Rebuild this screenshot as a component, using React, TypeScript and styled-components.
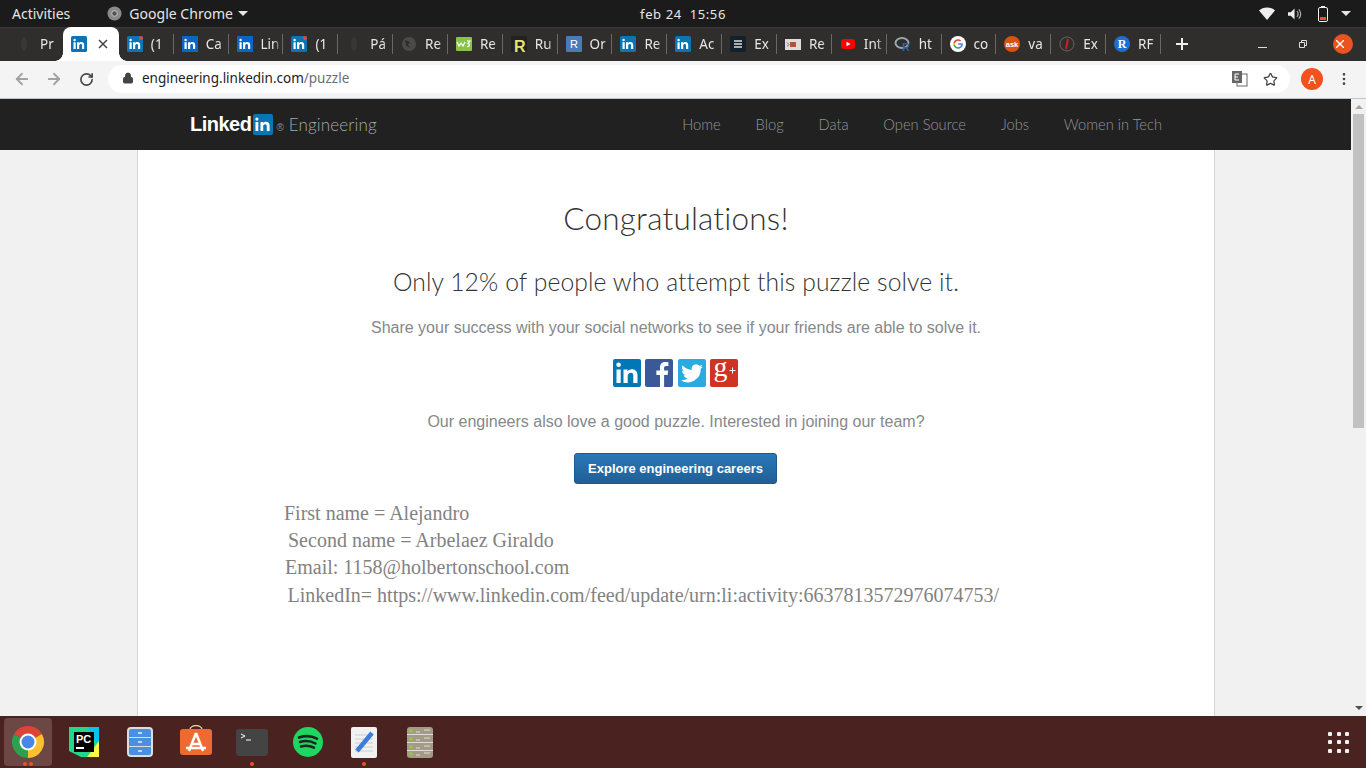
import { ReactNode } from 'react'
import styled, { createGlobalStyle } from 'styled-components'
import { ArrowLeft, ArrowRight, Lock, MoreVertical, RotateCw, Star } from 'lucide-react'

const GlobalStyle = createGlobalStyle`
  html, body { margin: 0; padding: 0; height: 100%; overflow: hidden; }
  #root { height: 768px; }
  * { box-sizing: border-box; }
`

const Screen = styled.div`
  width: 1366px;
  height: 768px;
  display: flex;
  flex-direction: column;
  overflow: hidden;
  font-family: 'Noto Sans', sans-serif;
`

const TopBar = styled.div`
  height: 27px;
  flex: none;
  background: #1b1b1b;
  color: #e6e6e6;
  font-size: 14px;
  display: grid;
  grid-template-columns: 1fr auto 1fr;
  align-items: center;
  padding: 0 12px;
`
const TopLeft = styled.div`
  display: flex;
  align-items: center;
`
const AppMenu = styled.div`
  display: flex;
  align-items: center;
  gap: 7px;
  margin-left: 37px;
`
const MenuName = styled.span`
  margin-right: -2px;
  letter-spacing: 0.02px;
`
const Clock = styled.div`
  font-size: 13px;
  letter-spacing: 0.6px;
  white-space: pre;
`
const TopRight = styled.div`
  display: flex;
  align-items: center;
  justify-content: flex-end;
  padding-right: 3px;
  svg:nth-child(1) { margin-right: 13px; }
  svg:nth-child(2) { margin-right: 16px; }
  svg:nth-child(3) { margin-right: 13px; }
`
const Caret = styled.span`
  width: 0;
  height: 0;
  border-left: 5px solid transparent;
  border-right: 5px solid transparent;
  border-top: 5px solid #e6e6e6;
`

const TabStrip = styled.div`
  height: 34px;
  flex: none;
  background: #2f2e2d;
  display: flex;
  align-items: stretch;
  padding-left: 8px;
  box-shadow: inset 0 1px 0 #3a3938;
`
const Tab = styled.div<{ $active?: boolean; $sep?: boolean }>`
  width: ${(p) => (p.$active ? 56 : 54.85)}px;
  flex: none;
  display: flex;
  align-items: center;
  gap: ${(p) => (p.$active ? 11 : 8)}px;
  padding-left: 8px;
  color: #e8e8e8;
  background: ${(p) => (p.$active ? '#fff' : 'transparent')};
  border-radius: ${(p) => (p.$active ? '8px 8px 0 0' : '0')};
  font-size: 13.5px;
  position: relative;
  white-space: nowrap;
  &::after {
    content: '';
    display: ${(p) => (p.$sep ? 'block' : 'none')};
    position: absolute;
    right: 0;
    top: 7px;
    height: 20px;
    width: 1px;
    background: #6a6967;
  }
`
const Flare = styled.span<{ $side: 'left' | 'right' }>`
  position: absolute;
  bottom: 0;
  width: 8px;
  height: 8px;
  ${(p) => (p.$side === 'left' ? 'left: -8px;' : 'right: -8px;')}
  background: radial-gradient(
    circle at ${(p) => (p.$side === 'left' ? '0 0' : '100% 0')},
    #2f2e2d 7.5px,
    #fff 8px
  );
`
const TabLabel = styled.span`
  width: 20px;
  overflow: hidden;
  flex: none;
  -webkit-mask-image: linear-gradient(90deg, #000 65%, transparent);
  mask-image: linear-gradient(90deg, #000 65%, transparent);
`
const Favicon = styled.span`
  width: 16px;
  height: 16px;
  flex: none;
  display: block;
  svg { overflow: visible; display: block; }
`
const NewTab = styled.div`
  width: 43px;
  display: flex;
  align-items: center;
  justify-content: center;
`
const WindowButtons = styled.div`
  margin-left: auto;
  display: flex;
  align-items: center;
  gap: 26px;
  padding-right: 13px;
  padding-bottom: 1px;
  svg:first-child { margin-right: 6px; }
`
const CloseButton = styled.span`
  width: 20px;
  height: 20px;
  border-radius: 50%;
  background: #e95420;
  display: flex;
  align-items: center;
  justify-content: center;
`

const AddressRow = styled.div`
  height: 37px;
  flex: none;
  background: #f4f4f4;
  display: flex;
  align-items: center;
  color: #555;
  padding: 0 0 1px 13px;
`
const NavIcons = styled.div`
  display: flex;
  align-items: center;
  gap: 14px;
  margin-right: 14px;
  color: #a2a2a2;
  svg:last-child { margin-left: 2px; }
`
const Omnibox = styled.div`
  width: 1182px;
  height: 28px;
  background: #fff;
  border-radius: 14px;
  display: flex;
  align-items: center;
  padding: 0 12px 2px 14px;
  font-size: 13.5px;
  color: #202124;
`
const UrlPath = styled.span`
  color: #6b6f73;
`
const OmniRight = styled.div`
  margin-left: auto;
  display: flex;
  align-items: center;
  gap: 15px;
  color: #444;
  margin-top: 2px;
`
const Avatar = styled.span`
  width: 22px;
  height: 22px;
  border-radius: 50%;
  background: #f4511e;
  color: #fff;
  font-size: 12px;
  display: flex;
  align-items: center;
  justify-content: center;
  margin-left: 11px;
`

const Viewport = styled.div`
  flex: 1;
  min-height: 0;
  display: flex;
  border-top: 1px solid #bfc7cc;
  background: #f1f1f1;
`
const Page = styled.div`
  flex: 1;
  min-width: 0;
  display: flex;
  flex-direction: column;
`
const SiteNav = styled.div`
  height: 51px;
  flex: none;
  background: #212121;
  display: flex;
  align-items: center;
  padding: 0 0 1px 190px;
  font-family: Lato, sans-serif;
`
const Logo = styled.div`
  display: flex;
  align-items: center;
  color: #fff;
  font-family: 'Liberation Sans', sans-serif;
  font-weight: 700;
  font-size: 20px;
  letter-spacing: -0.5px;
`
const LogoIn = styled.svg`
  margin-left: 2px;
`
const Reg = styled.span`
  font-size: 10px;
  color: #8a8a8a;
  font-weight: 400;
  margin: 7px 0 0 3px;
  letter-spacing: 0;
`
const LogoLabel = styled.span`
  font-family: Lato, sans-serif;
  font-weight: 300;
  font-size: 17px;
  color: #a4a8ab;
  margin-left: 5px;
  letter-spacing: 0.15px;
`
const NavLinks = styled.nav`
  display: flex;
  margin-left: auto;
  gap: 34.8px;
  margin-right: 189px;
  font-size: 14.7px;
  font-weight: 300;
  color: #92969a;
`
const Content = styled.main`
  flex: 1;
  width: 1078px;
  margin-left: 137px;
  background: #fff;
  border: solid #d6d6d6;
  border-width: 0 1px;
  text-align: center;
  font-family: 'Liberation Sans', sans-serif;
  color: #86888a;
  padding-top: 49px;
`
const Title = styled.h1`
  margin: 0;
  font-family: Lato, sans-serif;
  font-weight: 300;
  font-size: 31.5px;
  line-height: 38px;
  color: #333;
  letter-spacing: 0.2px;
`
const Subtitle = styled.h2`
  margin: 30px 0 0;
  font-family: Lato, sans-serif;
  font-weight: 300;
  font-size: 24.7px;
  line-height: 30px;
  color: #333;
  letter-spacing: 0.1px;
`
const Lead = styled.p<{ $top: number }>`
  margin: ${(p) => p.$top}px 0 0;
  font-size: 16px;
  line-height: 22px;
`
const Socials = styled.div`
  display: flex;
  justify-content: center;
  gap: 4.3px;
  margin-top: 20px;
  padding-right: 1px;
  svg { overflow: visible; }
`
const Career = styled.button`
  display: block;
  margin: 20px auto 0 436px;
  width: 203px;
  height: 31px;
  border: 1px solid #1c5a8e;
  border-radius: 3px;
  background: linear-gradient(#2a78b8, #215f95);
  color: #fff;
  font-family: 'Liberation Sans', sans-serif;
  font-weight: 700;
  font-size: 13px;
`
const Notes = styled.div`
  font-family: 'Liberation Serif', serif;
  font-size: 20px;
  line-height: 27.2px;
  color: #828282;
  text-align: left;
  margin: 16px 0 0 146px;
  white-space: pre;
`
const NoteLine = styled.div<{ $indent: number }>`
  padding-left: ${(p) => p.$indent}px;
`
const Scrollbar = styled.div`
  width: 15px;
  flex: none;
  background: #f1f1f1;
  display: flex;
  flex-direction: column;
  align-items: center;
  padding: 6px 0;
`
const ScrollArrow = styled.span<{ $down?: boolean }>`
  width: 0;
  height: 0;
  border-left: 4px solid transparent;
  border-right: 4px solid transparent;
  ${(p) => (p.$down ? 'border-top: 4px solid #505050; margin-top: auto;' : 'border-bottom: 4px solid #a3a3a3;')}
`
const ScrollThumb = styled.div`
  width: 11px;
  height: 314px;
  margin-top: 5px;
  background: #c1c1c1;
`

const Dock = styled.div`
  height: 52px;
  flex: none;
  background: #4a2320;
  display: flex;
  align-items: center;
  padding-left: 4px;
`
const DockSlot = styled.div<{ $active?: boolean }>`
  width: 48px;
  height: 48px;
  margin-right: 8px;
  border-radius: 4px;
  background: ${(p) => (p.$active ? '#6d4743' : 'transparent')};
  display: flex;
  align-items: center;
  justify-content: center;
  position: relative;
`
const DotRow = styled.div`
  position: absolute;
  bottom: 0;
  left: 0;
  right: 0;
  display: flex;
  justify-content: center;
  gap: 2px;
`
const Dot = styled.span`
  width: 4px;
  height: 4px;
  border-radius: 50%;
  background: #e95420;
`
const GridButton = styled.div`
  margin-left: auto;
  margin-right: 17px;
  display: grid;
  grid-template-columns: repeat(3, 4px);
  gap: 4.5px;
`
const GridDot = styled.span`
  width: 4px;
  height: 4px;
  border-radius: 1px;
  background: #f2f2f2;
`

const IN_GLYPH =
  'M2.5 6.2h2.2V13H2.5zM3.6 2.8a1.2 1.2 0 1 1 0 2.4 1.2 1.2 0 0 1 0-2.4zM6 6.2h2.1v.9c.4-.6 1.1-1.1 2.2-1.1 2 0 2.9 1.2 2.9 3.2V13H11V9.6c0-1-.4-1.6-1.3-1.6s-1.5.6-1.5 1.6V13H6z'

function In({ dot, square }: { dot?: boolean; square?: boolean }) {
  return (
    <svg width={16} height={16} viewBox="0 0 16 16">
      <rect width="16" height="16" rx={square ? 0 : 1.5} fill={square ? '#0a66c2' : '#0a75b5'} />
      <path fill="#fff" d={IN_GLYPH} />
      {dot && <circle cx="14" cy="2" r="2" fill="#e8453c" />}
    </svg>
  )
}

function Flame() {
  return (
    <svg width="16" height="16" viewBox="0 0 16 16">
      <ellipse cx="8" cy="8" rx="3" ry="7" fill="#383736" />
    </svg>
  )
}

const tabs: { label: string; icon: ReactNode }[] = [
  { label: 'Pr', icon: <Flame /> },
  { label: '', icon: <In /> },
  { label: '(1', icon: <In dot /> },
  { label: 'Ca', icon: <In square /> },
  { label: 'Lin', icon: <In square /> },
  { label: '(1', icon: <In dot /> },
  { label: 'Pá', icon: <Flame /> },
  {
    label: 'Re',
    icon: (
      <svg width="16" height="16" viewBox="0 0 16 16">
        <circle cx="8" cy="8" r="7" fill="#4a4a4a" />
        <path d="M4 4l5 2-2 3 3 3-5-2z" fill="#2f2e2d" />
      </svg>
    ),
  },
  {
    label: 'Re',
    icon: (
      <svg width="16" height="16" viewBox="0 0 16 16">
        <rect width="16" height="14" y="1" rx="1" fill="#8bc34a" />
        <path d="M1 6l2 4 2-3 2 3 2-4M11 5h3l-2 2.500c2 0 2 3.500-1 3" stroke="#fff" strokeWidth="1.200" fill="none" />
      </svg>
    ),
  },
  {
    label: 'Ru',
    icon: (
      <svg width="16" height="16" viewBox="0 0 16 16">
        <rect width="16" height="16" fill="#222" />
        <text x="3" y="16" fontFamily="Liberation Sans" fontWeight="700" fontSize="16" fill="#e8e36a">R</text>
      </svg>
    ),
  },
  {
    label: 'Or',
    icon: (
      <svg width="16" height="16" viewBox="0 0 16 16">
        <rect width="16" height="16" rx="1" fill="#4a7bb8" />
        <text x="4" y="12" fontFamily="Liberation Sans" fontSize="11" fill="#fff">R</text>
      </svg>
    ),
  },
  { label: 'Re', icon: <In /> },
  { label: 'Ac', icon: <In /> },
  {
    label: 'Ex',
    icon: (
      <svg width="16" height="16" viewBox="0 0 16 16">
        <rect width="16" height="16" rx="2" fill="#14202b" />
        <path d="M4 5h8M4 8h8M4 11h8" stroke="#ddd" strokeWidth="1.400" />
      </svg>
    ),
  },
  {
    label: 'Re',
    icon: (
      <svg width="16" height="16" viewBox="0 0 16 16">
        <rect y="3" width="16" height="11" fill="#ddd" />
        <rect x="5" y="6" width="6" height="5" fill="#c0512a" />
        <path d="M8 6v5M2 6.500L4 8.500 2 10.500" stroke="#666" fill="none" />
      </svg>
    ),
  },
  {
    label: 'Int',
    icon: (
      <svg width="16" height="16" viewBox="0 0 16 16">
        <rect x="1" y="3" width="14" height="10" rx="3" fill="#f00" />
        <path d="M6.500 5.800v4.400L10.500 8z" fill="#fff" />
      </svg>
    ),
  },
  {
    label: 'ht',
    icon: (
      <svg width="16" height="16" viewBox="0 0 16 16">
        <ellipse cx="7" cy="7" rx="6.500" ry="5" fill="none" stroke="#9aa7b5" strokeWidth="2" />
        <text x="7" y="15" fontFamily="Liberation Sans" fontWeight="700" fontSize="11" fill="#2266bb">R</text>
      </svg>
    ),
  },
  {
    label: 'co',
    icon: (
      <svg width="16" height="16" viewBox="0 0 16 16">
        <circle cx="8" cy="8" r="8" fill="#fff" />
        <path d="M8 3.200a4.800 4.800 0 0 1 3.200 1.200l-1.200 1.200A3.100 3.100 0 0 0 5 7H3.400A4.800 4.800 0 0 1 8 3.200z" fill="#ea4335" />
        <path d="M3.400 7H5v2H3.400a4.800 4.800 0 0 1 0-2z" fill="#fbbc05" />
        <path d="M3.400 9H5a3.100 3.100 0 0 0 5 1.400l1.300 1.200A4.800 4.800 0 0 1 3.400 9z" fill="#34a853" />
        <path d="M8.100 7.200h4.700c.2 1.700-.3 3.300-1.500 4.400L10 10.400c.6-.4 1-1 1.100-1.600h-3z" fill="#4285f4" />
      </svg>
    ),
  },
  {
    label: 'va',
    icon: (
      <svg width="16" height="16" viewBox="0 0 16 16">
        <circle cx="8" cy="8" r="8" fill="#d9530f" />
        <text x="8" y="10.500" textAnchor="middle" fontFamily="Liberation Sans" fontWeight="700" fontSize="7.500" fill="#fff">ask</text>
      </svg>
    ),
  },
  {
    label: 'Ex',
    icon: (
      <svg width="16" height="16" viewBox="0 0 16 16">
        <circle cx="8" cy="8" r="7" fill="#2f2e2d" stroke="#666" />
        <path d="M9 3L7 13" stroke="#d01f1f" strokeWidth="2" />
      </svg>
    ),
  },
  {
    label: 'RF',
    icon: (
      <svg width="16" height="16" viewBox="0 0 16 16">
        <circle cx="8" cy="8" r="8" fill="#1f6fd0" />
        <text x="8" y="12" textAnchor="middle" fontFamily="Liberation Serif" fontWeight="700" fontSize="12" fill="#fff">R</text>
      </svg>
    ),
  },
]

function ChromeIcon() {
  return (
    <svg width="48" height="48" viewBox="0 0 48 48">
      <path d="M24 24L10.140 16A16 16 0 0 1 37.860 16Z" fill="#db4437" />
      <path d="M24 24L37.860 16A16 16 0 0 1 24 40Z" fill="#fbc02d" />
      <path d="M24 24L24 40A16 16 0 0 1 10.140 16Z" fill="#2e9e4f" />
      <circle cx="24" cy="24" r="8.500" fill="#fff" />
      <circle cx="24" cy="24" r="6.500" fill="#4a86e8" />
    </svg>
  )
}

export default function App() {
  return (
    <>
      <GlobalStyle />
      <Screen>
        <TopBar>
          <TopLeft>
            <span>Activities</span>
            <AppMenu>
              <svg width="15" height="15" viewBox="0 0 16 16">
                <circle cx="8" cy="8" r="7.500" fill="#8a8a8a" />
                <circle cx="8" cy="8" r="3" fill="#555" stroke="#ccc" />
              </svg>
              <MenuName>Google Chrome</MenuName>
              <Caret />
            </AppMenu>
          </TopLeft>
          <Clock>feb 24  15:56</Clock>
          <TopRight>
            <svg width="16" height="14" viewBox="0 0 16 14">
              <path d="M0 3.500C4-.5 12-.5 16 3.500L8 13z" fill="#eee" />
            </svg>
            <svg width="14" height="14" viewBox="0 0 15 14">
              <path d="M0 5h3l4-4v12l-4-4H0z" fill="#eee" />
              <path d="M9.500 4a4 4 0 0 1 0 6M11.500 2a7 7 0 0 1 0 10" stroke="#bbb" fill="none" strokeWidth="1.200" />
            </svg>
            <svg width="10" height="16" viewBox="0 0 10 16">
              <rect x="0.500" y="1.500" width="9" height="14" rx="1.500" fill="none" stroke="#eee" />
              <rect x="3" y="0" width="4" height="1.500" fill="#eee" />
              <rect x="2" y="11" width="6" height="3" fill="#e95420" />
            </svg>
            <Caret />
          </TopRight>
        </TopBar>

        <TabStrip>
          {tabs.map((t, i) => (
            <Tab key={i} $active={i === 1} $sep={i > 1}>
              <Favicon>{t.icon}</Favicon>
              {i === 1 ? (
                <>
                  <Flare $side="left" />
                  <svg width="10" height="10" viewBox="0 0 10 10">
                    <path d="M1 1l8 8M9 1l-8 8" stroke="#444" strokeWidth="1.500" />
                  </svg>
                  <Flare $side="right" />
                </>
              ) : (
                <TabLabel>{t.label}</TabLabel>
              )}
            </Tab>
          ))}
          <NewTab>
            <svg width="12" height="12" viewBox="0 0 12 12">
              <path d="M6 0v12M0 6h12" stroke="#eee" strokeWidth="2" />
            </svg>
          </NewTab>
          <WindowButtons>
            <svg width="9" height="8" viewBox="0 0 9 8">
              <path d="M0 7.500h9" stroke="#ddd" />
            </svg>
            <svg width="8" height="8" viewBox="0 0 8 8">
              <path d="M.5 2.500h5v5h-5zM2.500 2.500v-2h5v5h-2" stroke="#ddd" fill="none" />
            </svg>
            <CloseButton>
              <svg width="8" height="8" viewBox="0 0 8 8">
                <path d="M0 0l8 8M8 0L0 8" stroke="#fff" strokeWidth="1.300" />
              </svg>
            </CloseButton>
          </WindowButtons>
        </TabStrip>

        <AddressRow>
          <NavIcons>
            <ArrowLeft size={18} strokeWidth={2.4} />
            <ArrowRight size={18} strokeWidth={2.4} />
            <RotateCw size={15} color="#444" strokeWidth={2.6} />
          </NavIcons>
          <Omnibox>
            <Lock size={12} color="#444" fill="#444" style={{ marginRight: 8 }} />
            engineering.linkedin.com<UrlPath>/puzzle</UrlPath>
            <OmniRight>
              <svg width="16" height="16" viewBox="0 0 16 16">
                <rect x="5" y="3" width="10" height="12" fill="#fff" stroke="#666" />
                <rect x="0" y="0" width="10" height="12" fill="#666" />
                <path d="M7 3H3v6h4M3 6h3" stroke="#fff" fill="none" />
              </svg>
              <Star size={15} strokeWidth={2} />
            </OmniRight>
          </Omnibox>
          <Avatar>A</Avatar>
          <MoreVertical size={16} color="#444" style={{ marginLeft: 13 }} />
        </AddressRow>

        <Viewport>
          <Page>
            <SiteNav>
              <Logo>
                Linked
                <LogoIn width="20" height="21" viewBox="0 0 20 21">
                  <rect width="20" height="21" rx="2" fill="#0a75b5" />
                  <path fill="#fff" d="M2.500 8h2.800v9H2.500zM3.900 3.500a1.600 1.600 0 1 1 0 3.200 1.600 1.600 0 0 1 0-3.200zM7.500 8h2.700v1.200c.5-.8 1.400-1.400 2.700-1.400 2.500 0 3.700 1.500 3.700 4V17h-2.800v-4.600c0-1.300-.5-2.100-1.700-2.100s-1.900.9-1.900 2.100V17H7.500z" />
                </LogoIn>
                <Reg>®</Reg>
                <LogoLabel>Engineering</LogoLabel>
              </Logo>
              <NavLinks>
                <span>Home</span>
                <span>Blog</span>
                <span>Data</span>
                <span>Open Source</span>
                <span>Jobs</span>
                <span>Women in Tech</span>
              </NavLinks>
            </SiteNav>
            <Content>
              <Title>Congratulations!</Title>
              <Subtitle>Only 12% of people who attempt this puzzle solve it.</Subtitle>
              <Lead $top={20}>Share your success with your social networks to see if your friends are able to solve it.</Lead>
              <Socials>
                <svg width="28" height="28" viewBox="0 0 28 28">
                  <rect width="28" height="28" rx="2" fill="#0277b5" />
                  <path fill="#fff" d="M3.500 10.500h4.200V24H3.500zM5.600 3.500a2.300 2.300 0 1 1 0 4.600 2.300 2.300 0 0 1 0-4.600zM10.500 10.500h4v1.900c.7-1.200 2.200-2.200 4.200-2.200 3.900 0 5.800 2.300 5.800 6.100V24h-4.200v-7c0-2-.7-3.200-2.500-3.200s-3.100 1.300-3.100 3.300V24h-4.200z" />
                </svg>
                <svg width="28" height="28" viewBox="0 0 28 28">
                  <rect width="28" height="28" rx="2" fill="#3b5998" />
                  <path fill="#fff" d="M15 28V16h-3.600v-4.400H15V8.500c0-3.700 2.200-5.500 5.300-5.500 1.500 0 2.700.1 3.100.2v3.900h-2.200c-1.700 0-2.100.8-2.100 2v2.500h4.100l-.6 4.400h-3.500v12z" />
                </svg>
                <svg width="28" height="28" viewBox="0 0 28 28">
                  <rect width="28" height="28" rx="2" fill="#29abe2" />
                  <path fill="#fff" d="M25 7.500c-.8.400-1.700.600-2.600.7.900-.6 1.600-1.400 2-2.500-.9.500-1.800.9-2.900 1.100a4.500 4.500 0 0 0-7.700 4.100C10.100 10.700 6.800 9 4.600 6.200c-1.200 2-.6 4.600 1.400 6-.7 0-1.400-.2-2-.6 0 2.200 1.500 4.100 3.600 4.500-.7.200-1.400.2-2 .1.600 1.800 2.300 3.100 4.200 3.100A9 9 0 0 1 3 21.200 12.800 12.800 0 0 0 22.700 9.800c.9-.6 1.700-1.400 2.300-2.300z" />
                </svg>
                <svg width="28" height="28" viewBox="0 0 28 28">
                  <rect width="28" height="28" rx="2" fill="#d03324" />
                  <text x="3.500" y="17" fontFamily="Liberation Serif" fontSize="28" fill="#fff">g</text>
                  <path d="M19.500 11.500h6M22.500 8.500v6" stroke="#fff" strokeWidth="1" />
                </svg>
              </Socials>
              <Lead $top={24}>Our engineers also love a good puzzle. Interested in joining our team?</Lead>
              <Career>Explore engineering careers</Career>
              <Notes>
                <NoteLine $indent={0}>First name = Alejandro</NoteLine>
                <NoteLine $indent={4}>Second name = Arbelaez Giraldo</NoteLine>
                <NoteLine $indent={1}>Email: 1158@holbertonschool.com</NoteLine>
                <NoteLine $indent={3.5}>LinkedIn= https://www.linkedin.com/feed/update/urn:li:activity:6637813572976074753/</NoteLine>
              </Notes>
            </Content>
          </Page>
          <Scrollbar>
            <ScrollArrow />
            <ScrollThumb />
            <ScrollArrow $down />
          </Scrollbar>
        </Viewport>

        <Dock>
          <DockSlot $active>
            <ChromeIcon />
            <DotRow><Dot /><Dot /></DotRow>
          </DockSlot>
          <DockSlot>
            <svg width="30" height="30" viewBox="0 0 30 30">
              <path d="M0 0h20L30 8v22H12L0 24z" fill="#21d789" />
              <path d="M18 0h12v20z" fill="#07c3f2" />
              <path d="M30 14v16H18z" fill="#fcf84a" />
              <rect x="5" y="5" width="20" height="20" fill="#000" />
              <text x="7" y="16" fontFamily="Liberation Sans" fontWeight="700" fontSize="11" fill="#fff">PC</text>
              <rect x="7" y="20" width="8" height="2" fill="#fff" />
            </svg>
          </DockSlot>
          <DockSlot>
            <svg width="26" height="30" viewBox="0 0 26 30">
              <rect x="1" y="1" width="24" height="28" rx="3" fill="#4a90e2" stroke="#ddd" strokeWidth="2" />
              <path d="M2 10.500h22M2 19.500h22" stroke="#ddd" />
              <path d="M11 6h4M11 15h4M11 24h4" stroke="#eee" strokeWidth="1.500" />
            </svg>
          </DockSlot>
          <DockSlot>
            <svg width="32" height="34" viewBox="0 0 32 34">
              <path d="M10 6V4.500a6 4 0 0 1 12 0V6" stroke="#e8c9a8" fill="none" strokeWidth="1.300" />
              <rect y="4" width="32" height="26" rx="3" fill="#ee6a33" />
              <path d="M16 8L9 26M16 8l7 18M11 19h10M6 23h20" stroke="#fff" strokeWidth="2.500" fill="none" />
            </svg>
          </DockSlot>
          <DockSlot>
            <svg width="32" height="27" viewBox="0 0 32 27">
              <rect width="32" height="27" rx="3" fill="#444" />
              <path d="M5 5l4 2-4 2M10 11h5" stroke="#fff" fill="none" />
            </svg>
            <DotRow><Dot /></DotRow>
          </DockSlot>
          <DockSlot>
            <svg width="30" height="30" viewBox="0 0 30 30">
              <circle cx="15" cy="15" r="15" fill="#1ed760" />
              <path d="M6 10.500c6-2 13-1.500 18 1.200M7 15c5-1.500 11-1 15.500 1.500M8 19.500c4.500-1.200 9-.8 13 1.200" stroke="#222" strokeWidth="2.500" fill="none" strokeLinecap="round" />
            </svg>
          </DockSlot>
          <DockSlot>
            <svg width="26" height="31" viewBox="0 0 26 31">
              <rect width="26" height="31" rx="2" fill="#f1f1f1" />
              <path d="M4 8h18M4 12h18M4 16h18M4 20h18M4 24h18" stroke="#ccc" />
              <path d="M6 24L21 6" stroke="#3b7ddd" strokeWidth="4.500" />
            </svg>
            <DotRow><Dot /></DotRow>
          </DockSlot>
          <DockSlot>
            <svg width="26" height="31" viewBox="0 0 26 31">
              <rect width="26" height="31" rx="3" fill="#a39b87" />
              <path d="M0 7.500h26M0 15.500h26M0 23.500h26" stroke="#ddd" />
              <g fill="#9ac04b">
                <circle cx="4" cy="4" r="2" />
                <circle cx="4" cy="12" r="2" />
                <circle cx="4" cy="20" r="2" />
                <circle cx="4" cy="27" r="2" />
              </g>
              <g stroke="#ddd">
                <path d="M9 5h4M9 13h4M9 21h4M9 28h4M17 3h6M17 11h6M17 19h6M17 26h6" />
              </g>
            </svg>
          </DockSlot>
          <GridButton>
            {Array.from({ length: 9 }, (_, i) => (
              <GridDot key={i} />
            ))}
          </GridButton>
        </Dock>
      </Screen>
    </>
  )
}
